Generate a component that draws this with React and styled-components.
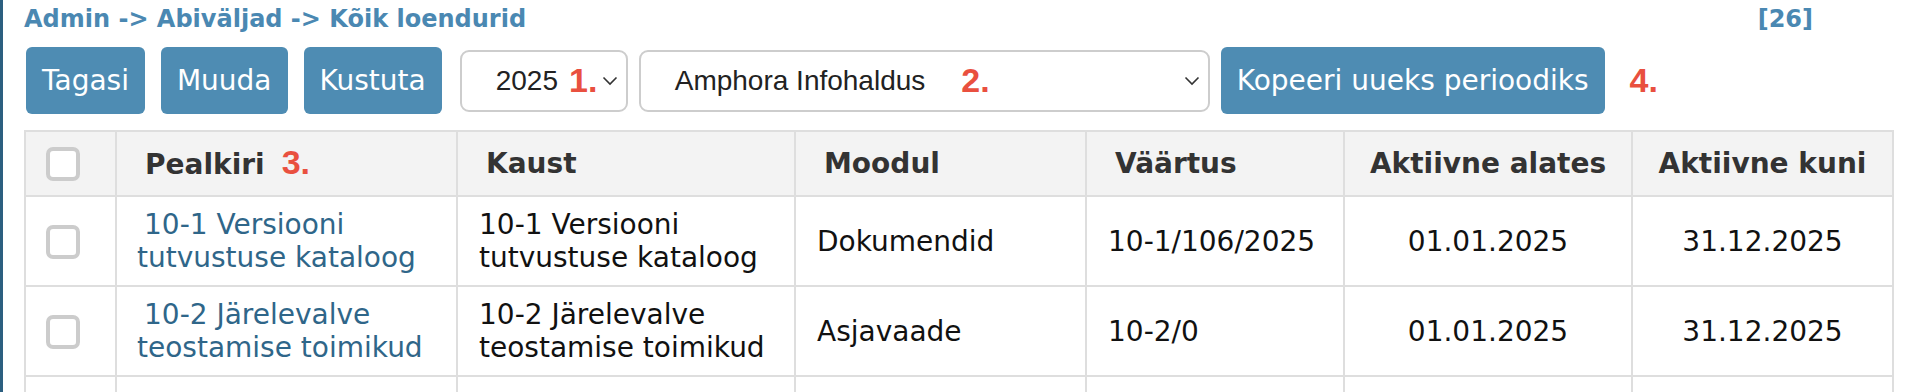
import styled, { createGlobalStyle } from "styled-components";

const GlobalStyle = createGlobalStyle`
  html, body {
    margin: 0;
    padding: 0;
    background: #ffffff;
  }
  body {
    font-family: "DejaVu Sans", Verdana, sans-serif;
  }
`;

const Page = styled.div`
  box-sizing: border-box;
  min-height: 392px;
  border-left: 3px solid #2c5f80;
  padding: 4px 18px 0 21px;
`;

const TopBar = styled.div`
  display: flex;
  justify-content: space-between;
  align-items: baseline;
  font-size: 24px;
  font-weight: bold;
  line-height: 30px;
  color: #4a88b2;
`;

const Count = styled.span`
  margin-right: 79px;
`;

const Toolbar = styled.div`
  display: flex;
  align-items: center;
  gap: 11px;
  height: 67px;
  margin-top: 13px;
  padding-left: 2px;
`;

const ButtonGroup = styled.div`
  display: flex;
  gap: 16px;
  margin-right: 7px;
`;

const Button = styled.button`
  height: 67px;
  padding: 0 16px;
  border: none;
  border-radius: 6px;
  background: #4e8cb3;
  color: #ffffff;
  font-family: "DejaVu Sans", Verdana, sans-serif;
  font-size: 28px;
  cursor: pointer;
`;

const SelectBox = styled.div`
  display: flex;
  align-items: center;
  box-sizing: border-box;
  width: ${(p) => p.$width}px;
  height: 62px;
  padding: 0 8px 0 34px;
  border: 2px solid #cdcdcd;
  border-radius: 9px;
  background: #ffffff;
  font-family: "Liberation Sans", Arial, sans-serif;
  font-size: 28px;
  color: #222222;
`;

const Chevron = styled.svg`
  margin-left: auto;
  flex: none;
`;

const Note = styled.span`
  margin-left: ${(p) => p.$gap || 0}px;
  font-family: "Liberation Sans", Arial, sans-serif;
  font-size: 34px;
  font-weight: bold;
  color: #e9503f;
`;

const Table = styled.table`
  width: 1868px;
  margin-top: 16px;
  border-collapse: collapse;
  table-layout: fixed;
  font-size: 28px;
  line-height: 33px;
`;

const Th = styled.th`
  padding: 14px ${(p) => (p.$pad != null ? p.$pad : 28)}px;
  border: 2px solid #dedede;
  background: #f3f3f3;
  color: #333333;
  font-weight: bold;
  text-align: ${(p) => p.$align || "left"};
  vertical-align: middle;
`;

const Td = styled.td`
  padding: 11px ${(p) => (p.$pad != null ? p.$pad : 21)}px;
  border: 2px solid #dedede;
  color: #111111;
  text-align: ${(p) => p.$align || "left"};
  vertical-align: middle;
  height: ${(p) => (p.$height ? `${p.$height}px` : "auto")};
`;

const TitleCell = styled(Td)`
  text-indent: 7px;
`;

const Link = styled.a`
  color: #2f6689;
  text-decoration: none;
`;

const Checkbox = styled.span`
  display: inline-block;
  box-sizing: border-box;
  width: 34px;
  height: 34px;
  border: 4px solid #cccccc;
  border-radius: 7px;
  background: #ffffff;
  vertical-align: middle;
`;

const ChevronIcon = () => (
  <Chevron width="16" height="10" viewBox="0 0 16 10">
    <polyline
      points="1.5,1.5 8,8 14.5,1.5"
      fill="none"
      stroke="#333"
      strokeWidth="1.6"
    />
  </Chevron>
);

const columns = [91, 341, 338, 291, 258, 288, 261];

const rows = [
  {
    title: ["10-1 Versiooni", "tutvustuse kataloog"],
    module: "Dokumendid",
    value: "10-1/106/2025",
    from: "01.01.2025",
    to: "31.12.2025",
  },
  {
    title: ["10-2 Järelevalve", "teostamise toimikud"],
    module: "Asjavaade",
    value: "10-2/0",
    from: "01.01.2025",
    to: "31.12.2025",
  },
];

export default function App() {
  return (
    <>
      <GlobalStyle />
      <Page>
        <TopBar>
          <span>Admin -&gt; Abiväljad -&gt; Kõik loendurid</span>
          <Count>[26]</Count>
        </TopBar>

        <Toolbar>
          <ButtonGroup>
            <Button>Tagasi</Button>
            <Button>Muuda</Button>
            <Button>Kustuta</Button>
          </ButtonGroup>
          <SelectBox $width={168}>
            <span>2025</span>
            <Note $gap={11}>1.</Note>
            <ChevronIcon />
          </SelectBox>
          <SelectBox $width={571}>
            <span>Amphora Infohaldus</span>
            <Note $gap={36}>2.</Note>
            <ChevronIcon />
          </SelectBox>
          <Button>Kopeeri uueks perioodiks</Button>
          <Note $gap={14}>4.</Note>
        </Toolbar>

        <Table>
          <colgroup>
            {columns.map((w, i) => (
              <col key={i} style={{ width: w }} />
            ))}
          </colgroup>
          <thead>
            <tr>
              <Th $pad={20}>
                <Checkbox />
              </Th>
              <Th>
                Pealkiri<Note $gap={17}>3.</Note>
              </Th>
              <Th>Kaust</Th>
              <Th>Moodul</Th>
              <Th>Väärtus</Th>
              <Th $align="center" $pad={10}>
                Aktiivne alates
              </Th>
              <Th $align="center" $pad={10}>
                Aktiivne kuni
              </Th>
            </tr>
          </thead>
          <tbody>
            {rows.map((r) => (
              <tr key={r.value}>
                <Td $pad={20}>
                  <Checkbox />
                </Td>
                <TitleCell $pad={20}>
                  <Link href="#">
                    {r.title[0]}
                    <br />
                    {r.title[1]}
                  </Link>
                </TitleCell>
                <Td>
                  {r.title[0]}
                  <br />
                  {r.title[1]}
                </Td>
                <Td>{r.module}</Td>
                <Td>{r.value}</Td>
                <Td $align="center">{r.from}</Td>
                <Td $align="center">{r.to}</Td>
              </tr>
            ))}
            <tr>
              {columns.map((w, i) => (
                <Td key={i} $height={66} />
              ))}
            </tr>
          </tbody>
        </Table>
      </Page>
    </>
  );
}
